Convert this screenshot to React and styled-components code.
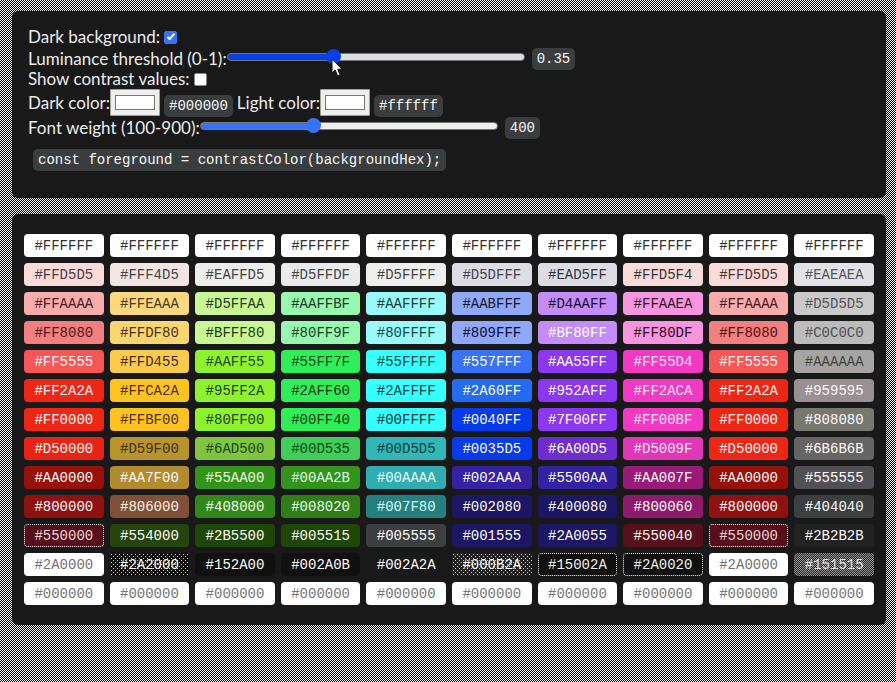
import React, { useState } from "react";
import styled, { createGlobalStyle, css } from "styled-components";

const GlobalStyle = createGlobalStyle`
  *, *::before, *::after { box-sizing: border-box; }
  html { min-height: 100%; background: repeating-conic-gradient(#000 0 25%, #fff 0 50%) 0 0 / 2px 2px; }
  body {
    margin: 0;
    color: #ececec;
    font-family: Lato, "Open Sans", sans-serif;
    font-size: 17px;
    line-height: 18px;
  }
`;

const Page = styled.main`
  display: flex;
  flex-direction: column;
  gap: 16px;
  padding: 11px 10px 16px 12px;
`;

const Panel = styled.section`
  background: #191919;
  border-radius: 6px;
`;

const Controls = styled(Panel)`
  display: flex;
  flex-direction: column;
  padding: 16px 16px 27px;
`;

const Row = styled.div`
  display: flex;
  align-items: center;
  min-height: ${(p) => p.$height}px;
  white-space: nowrap;
`;

const Label = styled.label`
  flex: none;
`;

const Chip = styled.code`
  flex: none;
  height: 22px;
  margin: 0 5px;
  padding: 0 5px;
  border-radius: 5px;
  background: #3a3d3e;
  color: #f7f7f7;
  font: 14px/23px "Liberation Mono", monospace;
`;

const ColorChip = styled(Chip)`
  align-self: flex-end;
  margin: 0 4px;
`;

const CodeLine = styled.div`
  display: flex;
  margin-top: 10px;
`;

const Checkbox = styled.input`
  appearance: none;
  display: grid;
  place-items: center;
  width: 13px;
  height: 13px;
  margin: 0 0 0 4px;
  border: 1px solid #8a8a84;
  border-radius: 2px;
  background: #fff;
  &:checked {
    border-color: #3574f5;
    background: #3574f5;
  }
  &:checked::before {
    content: "";
    width: 4px;
    height: 8px;
    margin-bottom: 2px;
    border: solid #fff;
    border-width: 0 2px 2px 0;
    transform: rotate(42deg);
  }
`;

const SliderWrap = styled.span`
  position: relative;
  display: flex;
  flex: 0 1 298px;
  margin: 0 2px 4px 0;
`;

const Slider = styled.input`
  appearance: none;
  width: 100%;
  height: 16px;
  margin: 0;
  background: transparent;
  &::-webkit-slider-runnable-track {
    height: 8px;
    border: 1px solid ${(p) => (p.$active ? "#77727c" : "#77777a")};
    border-radius: 4px;
    background: linear-gradient(
      to right,
      ${(p) => (p.$active ? "#0541e8" : "#3574f5")} var(--fill),
      ${(p) => (p.$active ? "#dedee2" : "#efefed")} var(--fill)
    );
  }
  &::-webkit-slider-thumb {
    appearance: none;
    width: 15px;
    height: 15px;
    margin-top: -5px;
    border-radius: 50%;
    background: ${(p) => (p.$active ? "#0541e8" : "#3574f5")};
  }
`;

const ColorInput = styled.input`
  appearance: none;
  width: 50px;
  height: 27px;
  padding: 5px 4px;
  border: 1px solid #a0a09c;
  border-radius: 1px;
  background: #efefed;
  &::-webkit-color-swatch-wrapper { padding: 0; }
  &::-webkit-color-swatch { border: 1px solid #77776e; border-radius: 0; }
`;

const Pointer = styled.svg`
  position: absolute;
  left: 35%;
  top: 9px;
  width: 12px;
  height: 19px;
  pointer-events: none;
`;

const Swatches = styled(Panel)`
  padding: 20px 12px;
`;

const Grid = styled.ul`
  display: grid;
  grid-template-columns: repeat(10, minmax(0, 1fr));
  gap: 6px;
  margin: 0;
  padding: 0;
  list-style: none;
`;

const dot = "conic-gradient(from 90deg at 3px 3px, #ccc 25%, transparent 0)";

const patterns = {
  sparse: css`
    background-image: ${dot}, ${dot};
    background-size: 4px 4px;
    background-position: 0 0, 2px 2px;
  `,
  dense: css`
    background-image: repeating-conic-gradient(#999 0 25%, #222 0 50%);
    background-size: 2px 2px;
  `,
  edge: css`
    outline: 1px dotted #fff;
    outline-offset: -1px;
  `,
};

const Swatch = styled.li`
  height: 23px;
  border-radius: 4px;
  background-color: ${(p) => p.$bg};
  color: ${(p) => p.$fg};
  font: 14px/24px "Liberation Mono", monospace;
  text-align: center;
  ${(p) => patterns[p.$pattern]}
`;

const W = "#fffafa";

const rows = [
  Array.from({ length: 10 }, () => ["#FFFFFF", "#ffffff", "#333333"]),
  [
    ["#FFD5D5", "#fbdada", "#4a3a3a"], ["#FFF4D5", "#f2e5e3", "#444444"], ["#EAFFD5", "#eeefed", "#444444"],
    ["#D5FFDF", "#e9ecea", "#444444"], ["#D5FFFF", "#eeefed", "#444444"], ["#D5DFFF", "#dddde3", "#444450"],
    ["#EAD5FF", "#dddde3", "#333340"], ["#FFD5F4", "#fbdada", "#333333"], ["#FFD5D5", "#fbdada", "#4a3434"],
    ["#EAEAEA", "#e2e2e6", "#555555"],
  ],
  [
    ["#FFAAAA", "#f7abab", "#4a2020"], ["#FFEAAA", "#fbd880", "#4a3a20"], ["#D5FFAA", "#c8f893", "#23381a"],
    ["#AAFFBF", "#97f8b0", "#1a3a24"], ["#AAFFFF", "#98fafb", "#1a3c3c"], ["#AABFFF", "#8fa8f7", "#14182c"],
    ["#D4AAFF", "#c38cf9", "#1a0c2c"], ["#FFAAEA", "#f895df", "#30182a"], ["#FFAAAA", "#f7abab", "#4a1818"],
    ["#D5D5D5", "#cacaca", "#545454"],
  ],
  [
    ["#FF8080", "#f37f80", "#521818"], ["#FFDF80", "#fad570", "#4a3118"], ["#BFFF80", "#c8f893", "#233810"],
    ["#80FF9F", "#97f8b0", "#1a4024"], ["#80FFFF", "#98fafb", "#104848"], ["#809FFF", "#8fa8f7", "#060c38"],
    ["#BF80FF", "#c38cf9", "#ffffff"], ["#FF80DF", "#f895df", "#2a0820"], ["#FF8080", "#f37f80", "#541010"],
    ["#C0C0C0", "#bcbcbc", "#505050"],
  ],
  [
    ["#FF5555", "#f55757", W], ["#FFD455", "#fbcb4e", "#492a10"], ["#AAFF55", "#8df32c", "#244c0c"],
    ["#55FF7F", "#2eef58", "#09451a"], ["#55FFFF", "#37feff", "#054040"], ["#557FFF", "#3873f5", W],
    ["#AA55FF", "#8c38f1", W], ["#FF55D4", "#f139c4", "#ffe4f4"], ["#FF5555", "#f55757", W],
    ["#AAAAAA", "#a5a5a1", "#454540"],
  ],
  [
    ["#FF2A2A", "#ee2615", W], ["#FFCA2A", "#fdc321", "#4f2d0b"], ["#95FF2A", "#8df32c", "#204208"],
    ["#2AFF60", "#2eef58", "#0f3210"], ["#2AFFFF", "#37feff", "#023d3d"], ["#2A60FF", "#236bf0", W],
    ["#952AFF", "#8c38f1", W], ["#FF2ACA", "#f139c4", "#ffe4f4"], ["#FF2A2A", "#ee2615", W],
    ["#959595", "#999094", W],
  ],
  [
    ["#FF0000", "#ee2615", W], ["#FFBF00", "#fdc321", "#50300a"], ["#80FF00", "#8df32c", "#25400e"],
    ["#00FF40", "#2eef58", "#0b380c"], ["#00FFFF", "#37feff", "#003535"], ["#0040FF", "#063be9", W],
    ["#7F00FF", "#8c38f1", W], ["#FF00BF", "#f139c4", "#ffe4f4"], ["#FF0000", "#ee2615", W],
    ["#808080", "#777870", W],
  ],
  [
    ["#D50000", "#e82414", W], ["#D59F00", "#b8942d", "#40300c"], ["#6AD500", "#80c53f", "#19460c"],
    ["#00D535", "#40cd5c", "#014b19"], ["#00D5D5", "#32b7b9", "#08393b"], ["#0035D5", "#063be9", W],
    ["#6A00D5", "#6f2dd0", W], ["#D5009F", "#e136b5", "#ffe4f4"], ["#D50000", "#ee2615", W],
    ["#6B6B6B", "#666564", W],
  ],
  [
    ["#AA0000", "#981109", W], ["#AA7F00", "#b18b2d", W], ["#55AA00", "#34931b", "#eaffdf"],
    ["#00AA2B", "#34931b", "#d8ffe5"], ["#00AAAA", "#30adb0", "#e5ffff"], ["#002AAA", "#3422a3", W],
    ["#5500AA", "#3422a3", W], ["#AA007F", "#9a1b77", W], ["#AA0000", "#981109", W],
    ["#555555", "#515155", W],
  ],
  [
    ["#800000", "#8f1110", W], ["#806000", "#815038", "#fff2e5"], ["#408000", "#318718", "#efffe5"],
    ["#008020", "#2f7f16", "#e5fff0"], ["#007F80", "#25807f", "#d5ffff"], ["#002080", "#1d1664", W],
    ["#400080", "#1d1664", W], ["#800060", "#8f1a6b", W], ["#800000", "#921110", W],
    ["#404040", "#3b3f40", W],
  ],
  [
    ["#550000", "#570f1b", "#eed3d6", "edge"], ["#554000", "#26450a", W], ["#2B5500", "#1e4706", W],
    ["#005515", "#1e4706", W], ["#005555", "#3b3f40", W], ["#001555", "#1d1664", W],
    ["#2A0055", "#1d1664", W], ["#550040", "#570f1b", W], ["#550000", "#570f1b", "#eed3d6", "edge"],
    ["#2B2B2B", "#222222", W],
  ],
  [
    ["#2A0000", "#ffffff", "#757070"], ["#2A2000", "#10110f", W, "sparse"], ["#152A00", "#10110f", W],
    ["#002A0B", "#10110f", W], ["#002A2A", "#191919", W], ["#000B2A", "#222222", "#ffffff", "sparse"],
    ["#15002A", "#10110f", "#eeeeee", "edge"], ["#2A0020", "#10110f", "#eeeeee", "edge"],
    ["#2A0000", "#ffffff", "#757070"], ["#151515", "#555555", "#e0e0e0", "dense"],
  ],
  Array.from({ length: 10 }, () => ["#000000", "#ffffff", "#757575"]),
];

function Range({ id, min, max, step, value, onChange, active, children }) {
  const ratio = (value - min) / (max - min);
  return (
    <SliderWrap>
      <Slider
        id={id}
        type="range"
        min={min}
        max={max}
        step={step}
        value={value}
        $active={active}
        style={{ "--fill": `${ratio * 100}%` }}
        onChange={(e) => onChange(Number(e.target.value))}
      />
      {children}
    </SliderWrap>
  );
}

export default function App() {
  const [threshold, setThreshold] = useState(0.35);
  const [weight, setWeight] = useState(400);
  return (
    <>
      <GlobalStyle />
      <Page>
        <Controls>
          <Row $height={20}>
            <Label htmlFor="dark-bg">Dark background:</Label>
            <Checkbox id="dark-bg" type="checkbox" defaultChecked />
          </Row>
          <Row $height={23}>
            <Label htmlFor="threshold">Luminance threshold (0-1):</Label>
            <Range id="threshold" min={0} max={1} step={0.01} value={threshold} onChange={setThreshold} active>
              <Pointer viewBox="0 0 12 19" aria-hidden="true">
                <path
                  d="M1 1v14l3.2-3 2.4 6 2.6-1-2.5-5.8H11z"
                  fill="#fff"
                  stroke="#111"
                  strokeWidth="1"
                />
              </Pointer>
            </Range>
            <Chip>{threshold}</Chip>
          </Row>
          <Row $height={18}>
            <Label htmlFor="contrast">Show contrast values:</Label>
            <Checkbox id="contrast" type="checkbox" />
          </Row>
          <Row $height={29}>
            <Label htmlFor="dark-color">Dark color:</Label>
            <ColorInput id="dark-color" type="color" defaultValue="#ffffff" />
            <ColorChip>#000000</ColorChip>
            <Label htmlFor="light-color">Light color:</Label>
            <ColorInput id="light-color" type="color" defaultValue="#ffffff" />
            <ColorChip>#ffffff</ColorChip>
          </Row>
          <Row $height={22}>
            <Label htmlFor="weight">Font weight (100-900):</Label>
            <Range id="weight" min={100} max={900} step={100} value={weight} onChange={setWeight} />
            <Chip>{weight}</Chip>
          </Row>
          <CodeLine>
            <Chip>const foreground = contrastColor(backgroundHex);</Chip>
          </CodeLine>
        </Controls>
        <Swatches>
          <Grid>
            {rows.flatMap((row, r) =>
              row.map(([hex, bg, fg, pattern], c) => (
                <Swatch key={`${r}-${c}`} $bg={bg} $fg={fg} $pattern={pattern}>
                  {hex}
                </Swatch>
              ))
            )}
          </Grid>
        </Swatches>
      </Page>
    </>
  );
}
